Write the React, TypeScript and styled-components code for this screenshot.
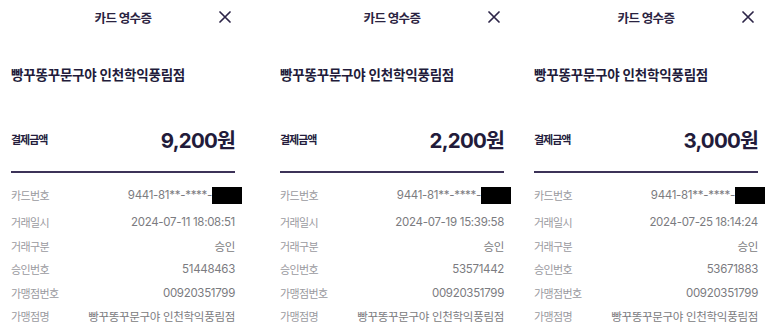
import styled, { createGlobalStyle } from "styled-components";

type Receipt = {
  amount: string;
  card: string;
  datetime: string;
  approval: string;
};

const STORE = "빵꾸똥꾸문구야 인천학익풍림점";
const MERCHANT_NO = "00920351799";

const receipts: Receipt[] = [
  { amount: "9,200원", card: "9441-81**-****-", datetime: "2024-07-11 18:08:51", approval: "51448463" },
  { amount: "2,200원", card: "9441-81**-****-", datetime: "2024-07-19 15:39:58", approval: "53571442" },
  { amount: "3,000원", card: "9441-81**-****-", datetime: "2024-07-25 18:14:24", approval: "53671883" },
];

const SHIFTS = [0, 45, 30];

const GlobalStyle = createGlobalStyle`
  body {
    margin: 0;
    background: #ffffff;
    font-family: "Inter", "Noto Sans CJK KR", sans-serif;
  }
`;

const Page = styled.div`
  display: flex;
  padding-left: 11px;
  height: 333px;
  overflow: hidden;
`;

interface PanelProps {
  $shift: number;
}

const Panel = styled.section<PanelProps>`
  width: 224px;
  flex-shrink: 0;
  margin-left: ${({ $shift }) => $shift}px;
  display: flex;
  flex-direction: column;
`;

const Header = styled.header`
  height: 34px;
  display: grid;
  grid-template-columns: 1fr auto 1fr;
  align-items: center;
`;

const Title = styled.h2`
  grid-column: 2;
  margin: 0;
  font-size: 12.5px;
  font-weight: 700;
  letter-spacing: -0.6px;
  color: #2a2341;
`;

const CloseBtn = styled.button`
  grid-column: 3;
  justify-self: end;
  margin-right: 4px;
  padding: 0;
  border: none;
  background: transparent;
  display: flex;
  color: #2d2548;
`;

const StoreName = styled.h1`
  margin: 31px 0 0;
  font-size: 13.5px;
  line-height: 20px;
  font-weight: 700;
  letter-spacing: -0.2px;
  color: #221b3a;
`;

const AmountRow = styled.div`
  margin-top: 39px;
  height: 30px;
  display: flex;
  align-items: center;
  justify-content: space-between;
`;

const AmountLabel = styled.span`
  font-size: 11px;
  font-weight: 700;
  letter-spacing: -1px;
  color: #241d3d;
`;

const Amount = styled.span`
  font-size: 20.5px;
  font-weight: 700;
  letter-spacing: -0.8px;
  color: #221b3a;
`;

const Divider = styled.hr`
  margin: 17px 0 0;
  border: none;
  height: 2px;
  background: #3c3258;
`;

const Rows = styled.dl`
  margin: 13px 0 0;
  display: flex;
  flex-direction: column;
  gap: 5.5px;
`;

interface RowProps {
  $extra?: number;
}

const Row = styled.div<RowProps>`
  height: 18px;
  display: flex;
  align-items: center;
  justify-content: space-between;
  margin-bottom: ${({ $extra }) => $extra ?? 0}px;
`;

const Label = styled.dt`
  font-size: 11px;
  letter-spacing: -0.6px;
  color: #9a9aa0;
`;

const Value = styled.dd`
  margin: 0;
  display: flex;
  align-items: center;
  font-size: 11.5px;
  letter-spacing: -0.3px;
  color: #7b7b80;
`;

const Redact = styled.span`
  display: inline-block;
  width: 30px;
  height: 17px;
  margin-right: -7px;
  background: #000000;
`;

function CloseIcon() {
  return (
    <svg width="12" height="12" viewBox="0 0 12 12" fill="none">
      <path d="M1 1 L11 11 M11 1 L1 11" stroke="currentColor" strokeWidth="1.7" strokeLinecap="round" />
    </svg>
  );
}

export default function App() {
  return (
    <>
      <GlobalStyle />
      <Page>
        {receipts.map((r, i) => (
          <Panel key={r.approval} $shift={SHIFTS[i]}>
            <Header>
              <Title>카드 영수증</Title>
              <CloseBtn aria-label="닫기">
                <CloseIcon />
              </CloseBtn>
            </Header>
            <StoreName>{STORE}</StoreName>
            <AmountRow>
              <AmountLabel>결제금액</AmountLabel>
              <Amount>{r.amount}</Amount>
            </AmountRow>
            <Divider />
            <Rows>
              <Row $extra={3.5}>
                <Label>카드번호</Label>
                <Value>
                  {r.card}
                  <Redact />
                </Value>
              </Row>
              <Row>
                <Label>거래일시</Label>
                <Value>{r.datetime}</Value>
              </Row>
              <Row>
                <Label>거래구분</Label>
                <Value>승인</Value>
              </Row>
              <Row>
                <Label>승인번호</Label>
                <Value>{r.approval}</Value>
              </Row>
              <Row>
                <Label>가맹점번호</Label>
                <Value>{MERCHANT_NO}</Value>
              </Row>
              <Row>
                <Label>가맹점명</Label>
                <Value>{STORE}</Value>
              </Row>
            </Rows>
          </Panel>
        ))}
      </Page>
    </>
  );
}
